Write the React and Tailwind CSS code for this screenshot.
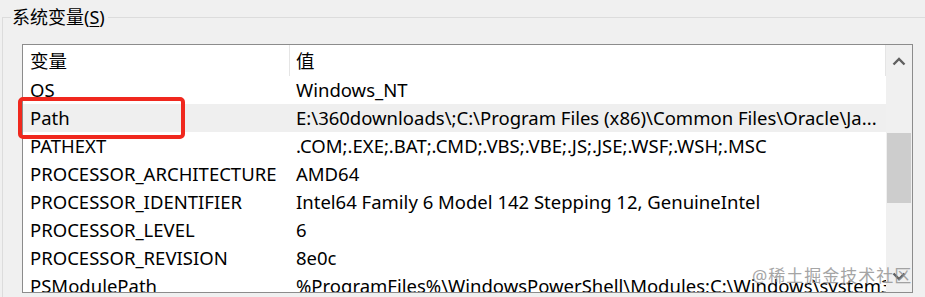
import React from 'react';

const rows = [
  { name: 'OS', value: 'Windows_NT' },
  { name: 'Path', value: 'E:\\360downloads\\;C:\\Program Files (x86)\\Common Files\\Oracle\\Ja...', selected: true },
  { name: 'PATHEXT', value: '.COM;.EXE;.BAT;.CMD;.VBS;.VBE;.JS;.JSE;.WSF;.WSH;.MSC' },
  { name: 'PROCESSOR_ARCHITECTURE', value: 'AMD64' },
  { name: 'PROCESSOR_IDENTIFIER', value: 'Intel64 Family 6 Model 142 Stepping 12, GenuineIntel' },
  { name: 'PROCESSOR_LEVEL', value: '6' },
  { name: 'PROCESSOR_REVISION', value: '8e0c' },
  { name: 'PSModulePath', value: '%ProgramFiles%\\WindowsPowerShell\\Modules;C:\\Windows\\system32\\WindowsPowerShell' },
];

const App = () => {
  return (
    <div
      className="relative w-[925px] h-[297px] overflow-hidden bg-[#f0f0f0] text-[18.5px] text-[#000]"
      style={{ fontFamily: '"Noto Sans", "Noto Sans CJK SC", sans-serif' }}
    >
      <div className="pl-[2px]">
        {/* group box title row */}
        <div className="flex items-center h-[34px]">
          <div className="w-[9px] h-[17px] self-end border-t border-l border-[#dcdcdc]" />
          <span className="px-[1px] leading-none text-[18px]">
            系统变量(<span className="underline underline-offset-2">S</span>)
          </span>
          <div className="flex-1 h-px bg-[#dcdcdc] ml-[2px]" />
        </div>

        {/* group box body */}
        <div className="border-l border-[#dcdcdc] pt-[10px] pl-[19px] h-[263px]">
          <div className="flex w-[891px] h-[249px] border border-[#8c8c8c] bg-white">
            <div className="flex-1 flex flex-col overflow-hidden">
              <div className="flex h-[31px] shrink-0">
                <div className="w-[267px] flex items-center pl-[7px] border-r border-[#e5e5e5]">变量</div>
                <div className="flex-1 flex items-center pl-[6px] border-r border-[#e5e5e5]">值</div>
              </div>
              {rows.map((row) => (
                <div
                  key={row.name}
                  className={`grid grid-cols-[267px_1fr] h-[28px] shrink-0 items-center whitespace-nowrap ${row.selected ? 'bg-[#efefef]' : ''}`}
                >
                  <div className="pl-[7px] overflow-hidden">{row.name}</div>
                  <div className="pl-[6px] overflow-hidden">{row.value}</div>
                </div>
              ))}
            </div>

            {/* scrollbar */}
            <div className="w-[26px] bg-[#f0f0f0] flex flex-col items-center">
              <div className="h-[32px] flex items-center justify-center w-full">
                <svg width="14" height="9" viewBox="0 0 14 9">
                  <path d="M1.5 7.5 L7 2 L12.5 7.5" fill="none" stroke="#606060" strokeWidth="2.4" />
                </svg>
              </div>
              <div className="mt-[56px] w-[24px] h-[70px] bg-[#cdcdcd]" />
              <div className="flex-1" />
              <div className="h-[32px] flex items-center justify-center w-full">
                <svg width="14" height="9" viewBox="0 0 14 9">
                  <path d="M1.5 1.5 L7 7 L12.5 1.5" fill="none" stroke="#606060" strokeWidth="2.4" />
                </svg>
              </div>
            </div>
          </div>
        </div>
      </div>

      {/* red highlight box */}
      <div className="absolute left-[18px] top-[97px] w-[167px] h-[42px] border-[4px] border-[#f0281e] rounded-[5px]" />

      {/* watermark */}
      <div className="absolute left-[752px] top-[263px] text-[17px] text-[#8f8f8f] opacity-80 tracking-[1px]">
        @稀土掘金技术社区
      </div>
    </div>
  );
};

export default App;
